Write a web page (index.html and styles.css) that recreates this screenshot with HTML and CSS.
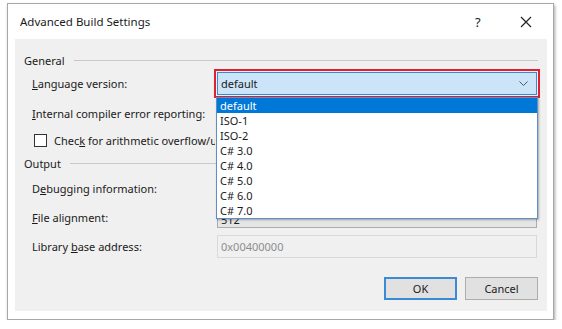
FILE: index.html
```html
<!DOCTYPE html>
<html lang="en">
<head>
    <meta charset="UTF-8">
    <meta name="viewport" content="width=device-width, initial-scale=1.0">
    <title>Advanced Build Settings</title>
    <link rel="stylesheet" href="styles.css">
</head>
<body>
    <div class="dialog">
        <div class="titlebar">
            <span class="title">Advanced Build Settings</span>
            <span class="help">?</span>
            <span class="close">
                <svg width="12" height="12" viewBox="0 0 12 12"><path d="M1 1 L11 11 M11 1 L1 11" stroke="#222" stroke-width="1.2" fill="none"/></svg>
            </span>
        </div>
        <div class="panel">
            <div class="group">
                <span>General</span>
                <span class="rule"></span>
            </div>
            <div class="row row-lang">
                <label class="label"><u>L</u>anguage version:</label>
                <div class="combo combo-active">
                    <span>default</span>
                    <svg class="arrow" width="9" height="5" viewBox="0 0 9 5"><path d="M0.5 0.5 L4.5 4.5 L8.5 0.5" stroke="#555" fill="none"/></svg>
                </div>
            </div>
            <div class="row row-internal">
                <label class="label"><u>I</u>nternal compiler error reporting:</label>
                <div class="combo"></div>
            </div>
            <div class="row row-check">
                <span class="checkbox"></span>
                <label class="check-label">Chec<u>k</u> for arithmetic overflow/underflow</label>
            </div>
            <div class="group group-output">
                <span>Output</span>
                <span class="rule"></span>
            </div>
            <div class="row row-debug">
                <label class="label">D<u>e</u>bugging information:</label>
                <div class="combo"></div>
            </div>
            <div class="row row-file">
                <label class="label"><u>F</u>ile alignment:</label>
                <div class="combo combo-gray">
                    <span class="clip-top">512</span>
                    <svg class="arrow" width="7" height="4" viewBox="0 0 7 4"><path d="M0 0 L7 0 L3.5 4 Z" fill="#555"/></svg>
                </div>
            </div>
            <div class="row row-lib">
                <label class="label">Library <u>b</u>ase address:</label>
                <div class="textbox">0x00400000</div>
            </div>
            <div class="buttons">
                <button class="btn btn-default">OK</button>
                <button class="btn">Cancel</button>
            </div>

            <ul class="dropdown">
                <li class="selected">default</li>
                <li>ISO-1</li>
                <li>ISO-2</li>
                <li>C# 3.0</li>
                <li>C# 4.0</li>
                <li>C# 5.0</li>
                <li>C# 6.0</li>
                <li>C# 7.0</li>
            </ul>
        </div>
    </div>
</body>
</html>
```

FILE: styles.css
```css
body {
    margin: 0;
    background: #fff;
    font-family: "Noto Sans", "Open Sans", sans-serif;
    font-size: 11px;
    color: #1a1a1a;
}
.dialog {
    margin: 3px 0 0 7px;
    width: 545px;
    height: 315px;
    border: 1px solid #a8a8a8;
    background: #fff;
    box-shadow: 1px 2px 3px rgba(0, 0, 0, 0.35);
    display: flex;
    flex-direction: column;
}
.titlebar {
    height: 35px;
    display: flex;
    align-items: center;
    padding: 0 0 0 12px;
}
.title {
    flex: 1;
    font-size: 11.5px;
}
.help {
    width: 12px;
    font-size: 13px;
    margin-right: 33px;
}
.close {
    width: 12px;
    height: 12px;
    margin-right: 21px;
    display: flex;
}
.panel {
    position: relative;
    margin: 0 6px 8px 7px;
    flex: 1;
    background: #f0f0f0;
    padding: 13px 9px 0 9px;
}
.group {
    height: 16px;
    display: flex;
    align-items: center;
}
.group .rule {
    flex: 1;
    height: 1px;
    background: #c8c8c8;
    margin-left: 9px;
}
.group-output {
    margin-top: 3px;
}
.row {
    display: flex;
    align-items: center;
    padding-left: 8px;
    white-space: nowrap;
}
.label {
    width: 185px;
    flex-shrink: 0;
}
.row-lang {
    margin-top: 1px;
    height: 29px;
}
.row-internal {
    margin-top: 2px;
    height: 26px;
}
.row-check {
    margin-top: 2px;
    height: 24px;
    padding-left: 10px;
}
.check-label {
    width: 161px;
    overflow: hidden;
}
.row-debug {
    margin-top: 4px;
    height: 26px;
}
.row-file {
    margin-top: 3px;
    height: 26px;
}
.row-lib {
    margin-top: 4px;
    height: 24px;
}
.combo {
    width: 320px;
    height: 22px;
    box-sizing: border-box;
    border: 1px solid #acacac;
    background: #fff;
    display: flex;
    align-items: center;
    padding: 0 8px 0 3px;
}
.combo span {
    flex: 1;
}
.combo-active {
    height: 23px;
    background: #cce4f7;
    border-color: #3c8ad4;
    outline: 2px solid #e0202e;
    outline-offset: 1px;
}
.combo-gray {
    background: #e5e5e5;
}
.clip-top {
    height: 9px;
    line-height: 4px;
    overflow: hidden;
    align-self: flex-end;
}
.combo-gray .arrow {
    align-self: flex-end;
    margin-bottom: 8px;
}
.checkbox {
    width: 11px;
    height: 11px;
    border: 1px solid #333;
    background: #fff;
    margin-right: 7px;
}
.textbox {
    width: 320px;
    height: 23px;
    box-sizing: border-box;
    border: 1px solid #d9d9d9;
    background: #f0f0f0;
    color: #8d8d8d;
    display: flex;
    align-items: center;
    padding-left: 3px;
}
.buttons {
    display: flex;
    justify-content: flex-end;
    gap: 8px;
    margin-top: 19px;
}
.btn {
    width: 73px;
    height: 23px;
    border: 1px solid #adadad;
    background: #e1e1e1;
    font-family: inherit;
    font-size: 11px;
    color: #1a1a1a;
    padding: 0;
}
.btn-default {
    border: 2px solid #3c8ad4;
}
.dropdown {
    position: absolute;
    top: 58px;
    left: 201px;
    width: 320px;
    margin: 0;
    padding: 0;
    list-style: none;
    background: #fff;
    border: 1px solid #5c8fc8;
    box-shadow: 1px 1px 2px rgba(0, 0, 0, 0.3);
}
.dropdown li {
    height: 15px;
    line-height: 15px;
    padding-left: 3px;
}
.dropdown li.selected {
    background: #0078d7;
    color: #fff;
}
```
